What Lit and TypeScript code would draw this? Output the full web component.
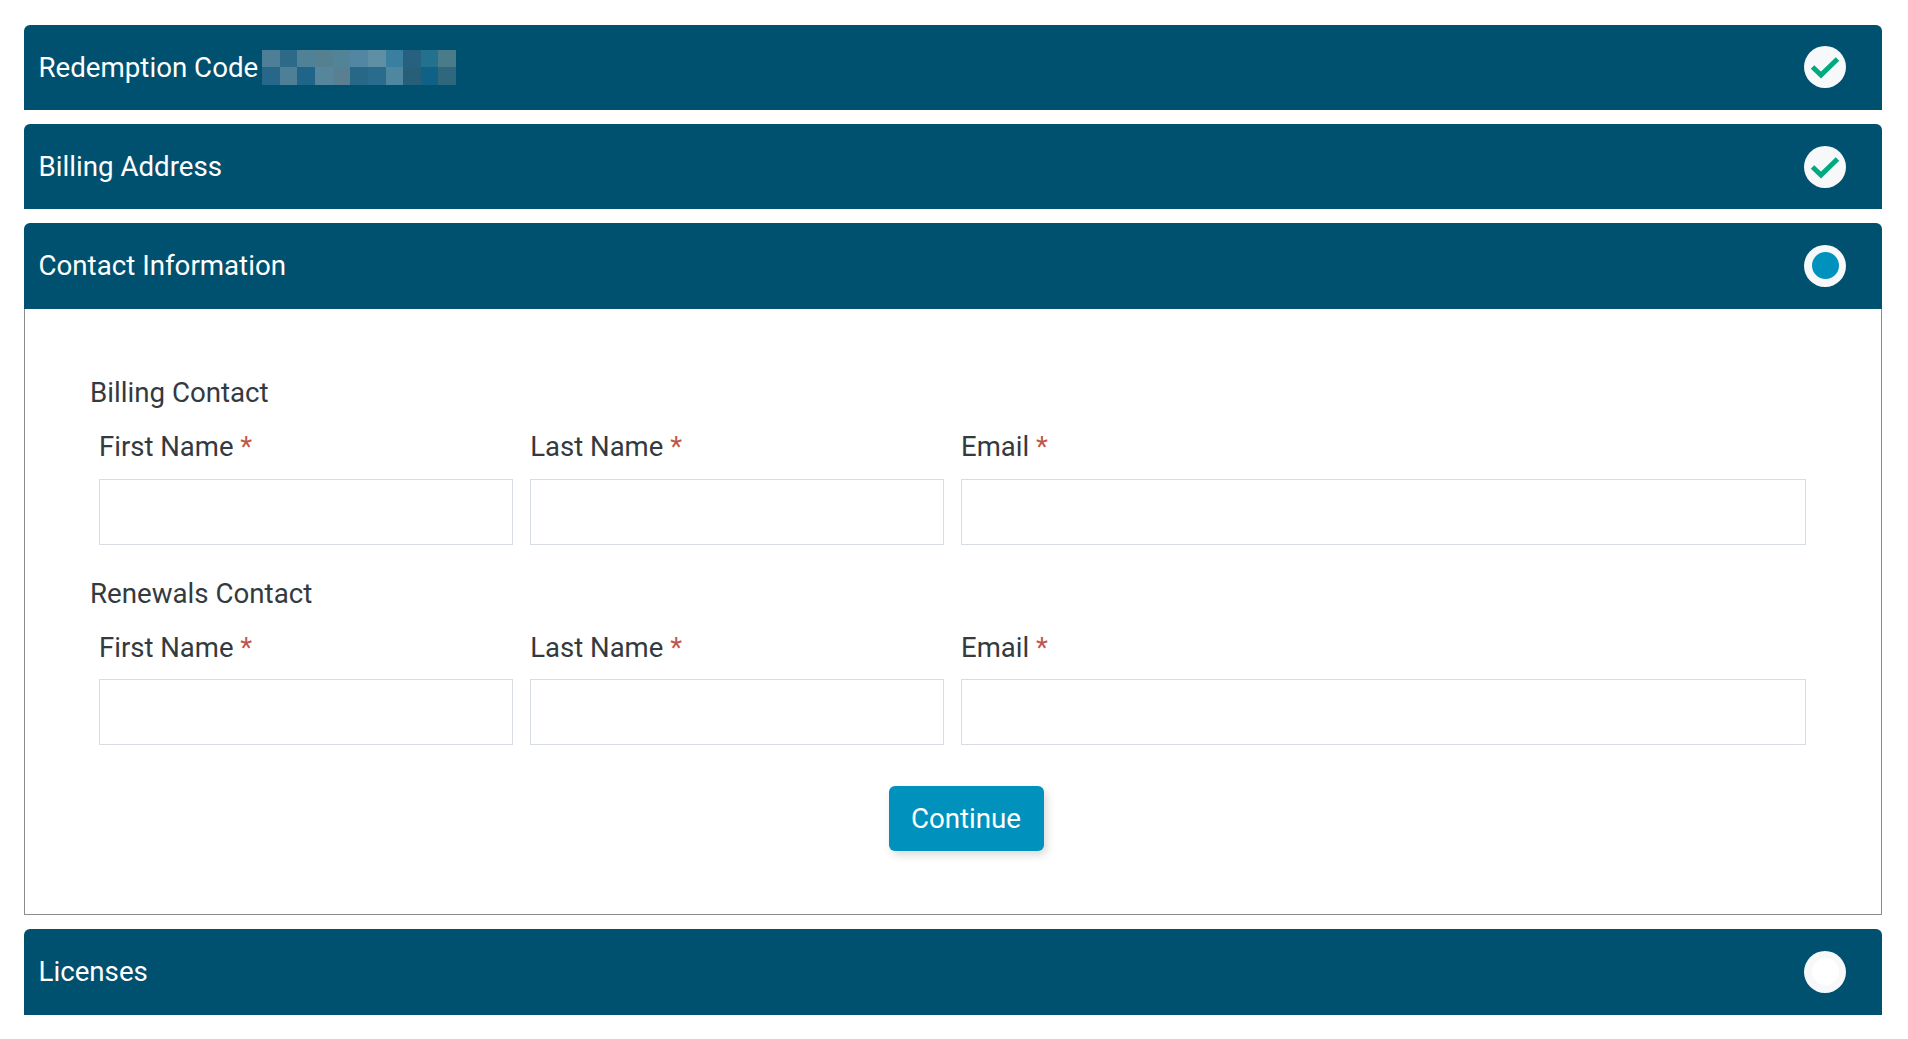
import { LitElement, html, css, svg } from "lit";
import { customElement } from "lit/decorators.js";

const BLUR = [
  "#4d7f96","#2c6a87","#4f8296","#54808f","#518496","#5287a3","#5f8fa5","#3a7f9f","#26627f","#24708f","#4a7b88",
  "#27688a","#4d7f96","#1f6489","#55869c","#5a7f92","#266886","#2a6c8e","#4f87a0","#265f77","#0f6286","#2f687e",
];

@customElement("app-root")
export class AppRoot extends LitElement {
  static styles = css`
    :host { display: block; background: #fff; font-family: Roboto, "Liberation Sans", sans-serif; padding: 24.7px 26px 0 24px; box-sizing: border-box; min-height: 1039px; }
    .step { margin-bottom: 13.7px; }
    .step.open { margin-bottom: 14.2px; }
    .head { height: 85.5px; background: #00506f; border-radius: 6px 6px 0 0; display: flex; align-items: center; padding: 0 36px 0 14.5px; color: #fff; font-size: 27.7px; box-sizing: border-box; }
    .title { flex: 1; display: flex; align-items: center; gap: 4px; }
    .blur { display: grid; grid-template-columns: repeat(11, 17.64px); grid-template-rows: repeat(2, 17.5px); }
    .dot { width: 42px; height: 42px; border-radius: 50%; background: #f6f8fa; display: flex; align-items: center; justify-content: center; }
    .dot svg { display: block; }
    .inner { width: 27px; height: 27px; border-radius: 50%; background: #0091bd; }
    .inner.empty { background: #fff; }
    .panel { border: 1px solid #8c8c8c; border-top: none; padding: 68.6px 0 0 0; height: 606.3px; box-sizing: border-box; color: #333a40; }
    .section { margin-left: 65px; font-size: 27.7px; line-height: 32px; }
    .row { display: grid; grid-template-columns: 414px 413.5px 844.5px; column-gap: 17.25px; margin: 0 0 33.5px 74px; padding-top: 21.8px; }
    .field { display: flex; flex-direction: column; }
    label { font-size: 27.5px; line-height: 32px; margin-bottom: 15.6px; }
    .req { color: #c0564a; }
    input { height: 66px; box-sizing: border-box; border: 1px solid #d8dde3; background: #fff; padding: 0 10px; font: inherit; outline: none; width: 100%; }
    .actions { display: flex; justify-content: center; padding: 7.5px 0 0 26px; }
    button { width: 155px; height: 65px; background: #0091bd; color: #fff; border: none; border-radius: 6px; font: inherit; font-size: 27.7px; box-shadow: 3px 4px 8px rgba(0,0,0,.15); }
  `;

  private check() {
    return html`<div class="dot"><svg width="30" height="30" viewBox="0 0 30 30">${svg`<path d="M2.5 15 L11 23 L27.5 7" fill="none" stroke="#00a97f" stroke-width="5"/>`}</svg></div>`;
  }

  private fields() {
    return html`<div class="row">
      ${["First Name", "Last Name", "Email"].map(
        (n) => html`<div class="field"><label>${n} <span class="req">*</span></label><input type="text" /></div>`
      )}
    </div>`;
  }

  render() {
    return html`
      <div class="step"><div class="head"><div class="title">Redemption Code <div class="blur">${BLUR.map((c) => html`<span style="background:${c}"></span>`)}</div></div>${this.check()}</div></div>
      <div class="step"><div class="head"><div class="title">Billing Address</div>${this.check()}</div></div>
      <div class="step open">
        <div class="head"><div class="title">Contact Information</div><div class="dot"><div class="inner"></div></div></div>
        <div class="panel">
          <div class="section">Billing Contact</div>
          ${this.fields()}
          <div class="section">Renewals Contact</div>
          ${this.fields()}
          <div class="actions"><button>Continue</button></div>
        </div>
      </div>
      <div class="step"><div class="head"><div class="title">Licenses</div><div class="dot"><div class="inner empty"></div></div></div></div>
    `;
  }
}
